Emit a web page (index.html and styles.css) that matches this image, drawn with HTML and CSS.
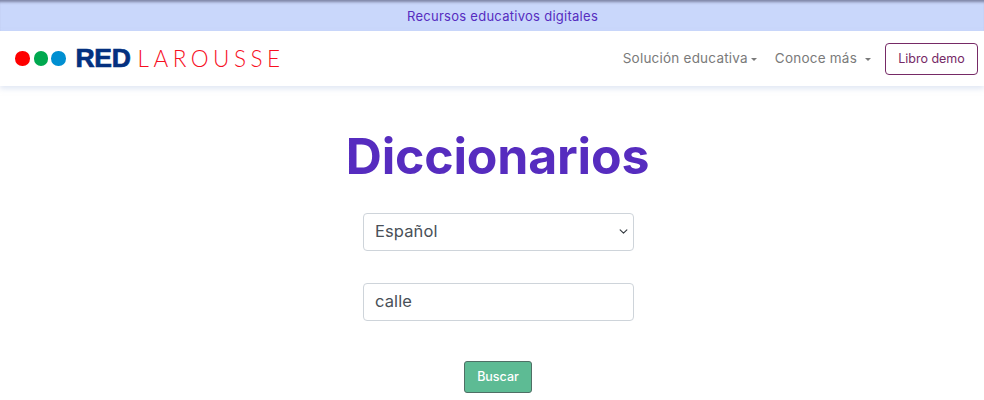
FILE: index.html
```html
<!DOCTYPE html>
<html lang="es">
<head>
  <meta charset="utf-8" />
  <title>Diccionarios • Red Larousse</title>
  <meta name="viewport" content="width=device-width, initial-scale=1" />
  <link rel="stylesheet" href="styles.css">
</head>
<body>
  <div class="banner">Recursos educativos digitales</div>

  <nav class="navbar">
    <a class="brand" href="#">
      <span class="dots">
        <span class="dot dot-red"></span>
        <span class="dot dot-green"></span>
        <span class="dot dot-blue"></span>
      </span>
      <span class="brand-red">RED</span>
      <span class="brand-larousse">LAROUSSE</span>
    </a>
    <div class="nav-links">
      <a class="nav-link" href="#">Solución educativa<span class="caret"></span></a>
      <a class="nav-link nav-link-spaced" href="#">Conoce más<span class="caret"></span></a>
      <a class="demo-btn" href="#">Libro demo</a>
    </div>
  </nav>

  <main class="content">
    <h1>Diccionarios</h1>
    <form class="search" autocomplete="off">
      <div class="select-wrap">
        <select class="field" name="idioma">
          <option>Español</option>
          <option>Inglés</option>
        </select>
        <svg class="chevron" viewBox="0 0 16 16" width="9" height="9"><path d="M2 5l6 6 6-6" fill="none" stroke="#343a40" stroke-width="2" stroke-linecap="round" stroke-linejoin="round"/></svg>
      </div>
      <input class="field" name="palabra" value="calle" />
      <button type="submit">Buscar</button>
    </form>
  </main>
</body>
</html>
```

FILE: styles.css
```css
body {
  margin:0;
  font-family:'Inter','Noto Sans',sans-serif;
  background:#fff;
  color:#495057;
}
.banner {
  height:31px;
  line-height:33px;
  box-sizing:border-box;
  padding-left:21px;
  text-align:center;
  font-size:13px;
  letter-spacing:.27px;
  color:#562cbf;
  background:#c9d7fb;
  box-shadow:inset 0 4px 3px -2px rgba(60,60,90,.55);
}
.navbar {
  height:55px;
  display:flex;
  align-items:center;
  justify-content:space-between;
  padding:0 6px 0 15px;
  background:#fff;
  box-shadow:0 3px 5px rgba(200,212,235,.5);
}
.brand {
  display:flex;
  align-items:center;
  text-decoration:none;
}
.dots {
  display:flex;
  gap:3px;
  margin-right:10px;
}
.dot {
  width:14.5px;
  height:14.5px;
  border-radius:50%;
}
.dot-red { background:#fe0000; margin-right:1px; }
.dot-green { background:#00a84f; }
.dot-blue { background:#008fd1; }
.brand-red {
  font-family:'Liberation Sans',sans-serif;
  font-weight:700;
  font-size:26.5px;
  letter-spacing:-.3px;
  color:#04307f;
  -webkit-text-stroke:.7px #04307f;
}
.brand-larousse {
  margin-left:7px;
  font-family:'Lato',sans-serif;
  font-weight:300;
  font-size:22.5px;
  letter-spacing:4.5px;
  color:#f7101f;
}
.nav-links {
  display:flex;
  align-items:center;
}
.nav-link {
  padding-bottom:2px;
  font-size:13.5px;
  letter-spacing:.22px;
  color:#7a7a7a;
  text-decoration:none;
}
.nav-link-spaced {
  margin-left:18px;
  margin-right:14px;
}
.nav-link-spaced .caret {
  margin-left:8px;
}
.caret {
  display:inline-block;
  margin-left:3px;
  vertical-align:2px;
  border-top:3.5px solid #7a7a7a;
  border-left:3px solid transparent;
  border-right:3px solid transparent;
}
.demo-btn {
  width:93px;
  height:32px;
  line-height:29px;
  box-sizing:border-box;
  text-align:center;
  font-size:12.5px;
  color:#762a66;
  border:1px solid #762a66;
  border-radius:4px;
  text-decoration:none;
}
.content {
  padding-left:13px;
  text-align:center;
}
h1 {
  margin:0;
  padding:32px 2px 0 0;
  font-size:50px;
  line-height:76px;
  letter-spacing:-.2px;
  font-weight:700;
  color:#562cbf;
}
.search {
  display:flex;
  flex-direction:column;
  align-items:center;
  margin-top:19px;
}
.select-wrap {
  position:relative;
  width:271px;
  height:38px;
}
.chevron {
  position:absolute;
  right:6px;
  top:14px;
  pointer-events:none;
}
.field {
  width:271px;
  height:38px;
  box-sizing:border-box;
  padding:0 11px 2px;
  font-family:inherit;
  font-size:16.5px;
  letter-spacing:.1px;
  color:#495057;
  background:#fff;
  border:1px solid #ced4da;
  border-radius:4px;
  outline:none;
}
select.field {
  appearance:none;
}
input.field {
  margin-top:32px;
}
button {
  margin-top:40px;
  margin-right:1px;
  width:68px;
  height:32px;
  padding:0 0 2px;
  font-family:inherit;
  font-size:12.5px;
  font-weight:500;
  color:#fff;
  background:#5dbb94;
  border:1px solid #4f6f65;
  border-radius:3px;
  cursor:pointer;
}
```
